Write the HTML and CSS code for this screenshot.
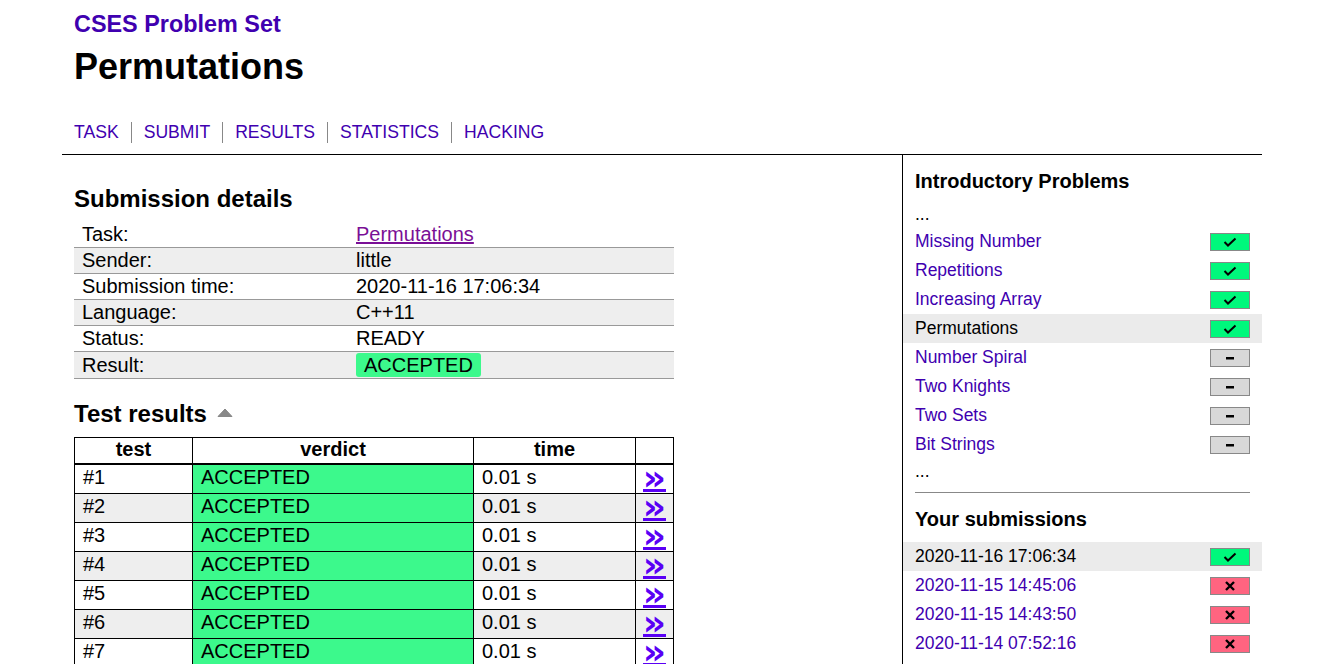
FILE: index.html
```html
<!DOCTYPE html>
<html>
<head>
<meta charset="utf-8">
<title>CSES - Permutations - Results</title>
<link rel="stylesheet" href="styles.css">
</head>
<body>
<div class="page">
  <header class="header">
    <a class="site-title" href="#">CSES Problem Set</a>
    <h1 class="page-title">Permutations</h1>
    <nav class="nav">
      <a href="#" class="nav-item">TASK</a>
      <a href="#" class="nav-item">SUBMIT</a>
      <a href="#" class="nav-item">RESULTS</a>
      <a href="#" class="nav-item">STATISTICS</a>
      <a href="#" class="nav-item">HACKING</a>
    </nav>
  </header>
  <div class="body">
    <main class="content">
      <h2 class="section-title first">Submission details</h2>
      <table class="details">
        <tr><td class="label">Task:</td><td><a class="visited" href="#">Permutations</a></td></tr>
        <tr><td class="label">Sender:</td><td>little</td></tr>
        <tr><td class="label">Submission time:</td><td>2020-11-16 17:06:34</td></tr>
        <tr><td class="label">Language:</td><td>C++11</td></tr>
        <tr><td class="label">Status:</td><td>READY</td></tr>
        <tr><td class="label">Result:</td><td><span class="badge">ACCEPTED</span></td></tr>
      </table>
      <h2 class="section-title second">Test results <svg class="toggle" width="16" height="9" viewBox="0 0 16 9"><path d="M1 8.5 L8 1 L15 8.5 Z" fill="#888" stroke="#888" stroke-width="1" stroke-linejoin="round"/></svg></h2>
      <table class="tests">
        <thead>
          <tr><th class="c-test">test</th><th class="c-verdict">verdict</th><th class="c-time">time</th><th class="c-link"></th></tr>
        </thead>
        <tbody>
          <tr><td>#1</td><td class="ok">ACCEPTED</td><td>0.01 s</td><td class="link"><a href="#">»</a></td></tr>
          <tr><td>#2</td><td class="ok">ACCEPTED</td><td>0.01 s</td><td class="link"><a href="#">»</a></td></tr>
          <tr><td>#3</td><td class="ok">ACCEPTED</td><td>0.01 s</td><td class="link"><a href="#">»</a></td></tr>
          <tr><td>#4</td><td class="ok">ACCEPTED</td><td>0.01 s</td><td class="link"><a href="#">»</a></td></tr>
          <tr><td>#5</td><td class="ok">ACCEPTED</td><td>0.01 s</td><td class="link"><a href="#">»</a></td></tr>
          <tr><td>#6</td><td class="ok">ACCEPTED</td><td>0.01 s</td><td class="link"><a href="#">»</a></td></tr>
          <tr><td>#7</td><td class="ok">ACCEPTED</td><td>0.01 s</td><td class="link"><a href="#">»</a></td></tr>
          <tr><td>#8</td><td class="ok">ACCEPTED</td><td>0.01 s</td><td class="link"><a href="#">»</a></td></tr>
        </tbody>
      </table>
    </main>
    <aside class="sidebar">
      <h3 class="side-title first">Introductory Problems</h3>
      <div class="side-row dots">...</div>
      <a href="#" class="side-row"><span>Missing Number</span><span class="score full"><svg width="14" height="10" viewBox="0 0 14 10"><path d="M1.5 5 L5 8.5 L12.5 1.5" fill="none" stroke="#000" stroke-width="2"/></svg></span></a>
      <a href="#" class="side-row"><span>Repetitions</span><span class="score full"><svg width="14" height="10" viewBox="0 0 14 10"><path d="M1.5 5 L5 8.5 L12.5 1.5" fill="none" stroke="#000" stroke-width="2"/></svg></span></a>
      <a href="#" class="side-row"><span>Increasing Array</span><span class="score full"><svg width="14" height="10" viewBox="0 0 14 10"><path d="M1.5 5 L5 8.5 L12.5 1.5" fill="none" stroke="#000" stroke-width="2"/></svg></span></a>
      <div class="side-row current"><span>Permutations</span><span class="score full"><svg width="14" height="10" viewBox="0 0 14 10"><path d="M1.5 5 L5 8.5 L12.5 1.5" fill="none" stroke="#000" stroke-width="2"/></svg></span></div>
      <a href="#" class="side-row"><span>Number Spiral</span><span class="score none"><svg width="10" height="4" viewBox="0 0 10 4"><rect x="1" y="1" width="8" height="2.5" fill="#000"/></svg></span></a>
      <a href="#" class="side-row"><span>Two Knights</span><span class="score none"><svg width="10" height="4" viewBox="0 0 10 4"><rect x="1" y="1" width="8" height="2.5" fill="#000"/></svg></span></a>
      <a href="#" class="side-row"><span>Two Sets</span><span class="score none"><svg width="10" height="4" viewBox="0 0 10 4"><rect x="1" y="1" width="8" height="2.5" fill="#000"/></svg></span></a>
      <a href="#" class="side-row"><span>Bit Strings</span><span class="score none"><svg width="10" height="4" viewBox="0 0 10 4"><rect x="1" y="1" width="8" height="2.5" fill="#000"/></svg></span></a>
      <div class="side-row dots last">...</div>
      <hr class="side-sep">
      <h3 class="side-title">Your submissions</h3>
      <div class="side-row current"><span>2020-11-16 17:06:34</span><span class="score full"><svg width="14" height="10" viewBox="0 0 14 10"><path d="M1.5 5 L5 8.5 L12.5 1.5" fill="none" stroke="#000" stroke-width="2"/></svg></span></div>
      <a href="#" class="side-row"><span>2020-11-15 14:45:06</span><span class="score zero"><svg width="12" height="12" viewBox="0 0 12 12"><path d="M2 2 L10 10 M10 2 L2 10" fill="none" stroke="#000" stroke-width="2.4"/></svg></span></a>
      <a href="#" class="side-row"><span>2020-11-15 14:43:50</span><span class="score zero"><svg width="12" height="12" viewBox="0 0 12 12"><path d="M2 2 L10 10 M10 2 L2 10" fill="none" stroke="#000" stroke-width="2.4"/></svg></span></a>
      <a href="#" class="side-row"><span>2020-11-14 07:52:16</span><span class="score zero"><svg width="12" height="12" viewBox="0 0 12 12"><path d="M2 2 L10 10 M10 2 L2 10" fill="none" stroke="#000" stroke-width="2.4"/></svg></span></a>
    </aside>
  </div>
</div>
</body>
</html>
```

FILE: styles.css
```css
html, body {
  margin: 0;
  padding: 0;
  background: #fff;
}
body {
  font-family: "Liberation Sans", Arial, sans-serif;
  color: #000;
}
a {
  color: #4000b0;
  text-decoration: none;
}
.page {
  width: 1200px;
  margin-left: 62px;
}
.header {
  padding: 11px 12px 11px;
  border-bottom: 1px solid #000;
  display: flex;
  flex-direction: column;
  align-items: flex-start;
}
.site-title {
  font-size: 23.4px;
  font-weight: bold;
  line-height: 27px;
}
.page-title {
  font-size: 36px;
  line-height: 41px;
  margin: 8px 0 0;
}
.nav {
  display: flex;
  margin-top: 35px;
}
.nav-item {
  font-size: 17.6px;
  line-height: 21px;
  padding: 0 12px;
  border-left: 1px solid #888;
}
.nav-item:first-child {
  padding-left: 0;
  border-left: none;
}
.body {
  display: flex;
  align-items: stretch;
}
.content {
  width: 816px;
  padding: 0 12px;
}
.section-title {
  font-size: 24px;
  line-height: 28px;
  margin: 0;
  display: flex;
  align-items: center;
}
.section-title.first {
  margin-top: 30px;
  margin-bottom: 9px;
}
.section-title.second {
  margin-top: 21px;
  margin-bottom: 9px;
}
.toggle {
  margin-left: 10px;
  margin-top: -3px;
}
.details {
  width: 600px;
  border-collapse: collapse;
  font-size: 20px;
}
.details td {
  padding: 1px 8px;
  line-height: 23px;
  border-top: 1px solid #999;
  vertical-align: middle;
}
.details tr:first-child td {
  border-top: none;
}
.details tr:last-child td {
  border-bottom: 1px solid #999;
}
.details tr:nth-child(even) td {
  background: #eee;
}
.details td.label {
  width: 258px;
}
.visited {
  color: #7a0f96;
  text-decoration: underline;
}
.badge {
  display: inline-block;
  background: #3cf98c;
  border-radius: 3px;
  padding: 0 8px;
  line-height: 24px;
}
.tests {
  width: 600px;
  border-collapse: collapse;
  font-size: 20px;
  border: 1px solid #000;
}
.tests th {
  font-weight: bold;
  text-align: center;
  line-height: 23px;
  padding: 0 8px 2px;
  border: 1px solid #000;
  border-bottom: 2px solid #000;
}
.tests td {
  line-height: 24px;
  height: 24px;
  padding: 0 8px 4px;
  border: 1px solid #000;
}
.tests tbody tr:nth-child(even) td {
  background: #eee;
}
.tests tbody tr td.ok {
  background: #3cf98c;
}
.c-test { width: 101px; }
.c-verdict { width: 264px; }
.c-time { width: 145px; }
.tests td.link {
  text-align: center;
  padding: 0;
  height: 28px;
  vertical-align: top;
}
.tests td.link a {
  display: inline-block;
  color: #5a00f5;
  font-family: "DejaVu Sans", sans-serif;
  font-weight: bold;
  font-size: 36px;
  height: 22px;
  line-height: 22px;
  margin-top: 2px;
  border-bottom: 3px solid #5a00f5;
  vertical-align: top;
}
.sidebar {
  width: 359px;
  border-left: 1px solid #000;
  min-height: 520px;
}
.side-title {
  font-size: 20px;
  line-height: 23px;
  margin: 0;
  padding: 0 12px;
}
.side-title.first {
  margin-top: 15px;
  margin-bottom: 5px;
}
.side-title:not(.first) {
  margin-top: 15px;
  margin-bottom: 11px;
}
.side-row {
  display: flex;
  justify-content: space-between;
  align-items: center;
  height: 29px;
  padding: 0 12px;
  font-size: 17.5px;
}
.side-row.current {
  background: #ebebeb;
  color: #000;
}
.side-row.dots {
  color: #000;
  padding-top: 3px;
  height: 26px;
}
.side-row.dots.last {
  padding-top: 0;
  height: 25px;
}
.score {
  width: 38px;
  height: 16px;
  border: 1px solid #888;
  display: flex;
  align-items: center;
  justify-content: center;
}
.score.full { background: #00f87c; }
.score.none { background: #d8d8d8; }
.score.zero { background: #ff6480; }
.side-sep {
  margin: 8px 12px 0;
  border: none;
  border-top: 1px solid #888;
  height: 0;
}
```
